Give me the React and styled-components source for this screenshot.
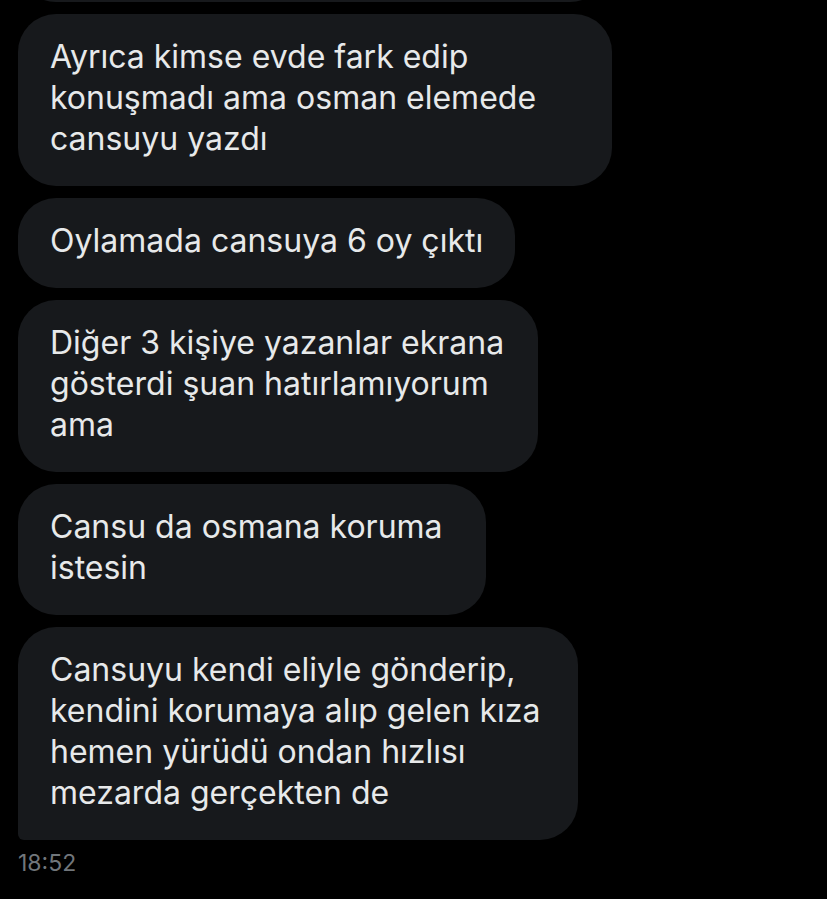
import React from "react";
import styled, { createGlobalStyle } from "styled-components";

const Global = createGlobalStyle`
  html, body {
    margin: 0;
    padding: 0;
    background: #000;
  }
  body {
    font-family: Inter, Roboto, "Noto Sans", sans-serif;
  }
`;

const Thread = styled.div`
  display: flex;
  flex-direction: column;
  align-items: flex-start;
  gap: 12px;
  padding: 0 0 0 18px;
  overflow: hidden;
  min-height: 899px;
  box-sizing: border-box;
`;

const Bubble = styled.div`
  box-sizing: border-box;
  width: ${(p) => p.$w}px;
  padding: 22px 32px 27px 32px;
  background: #17191c;
  color: #e7e9ea;
  font-size: 32px;
  line-height: 41px;
  white-space: nowrap;
  border-radius: 38px 38px 38px ${(p) => (p.$last ? "6px" : "38px")};
`;

const PrevTail = styled(Bubble)`
  height: 100px;
  margin-top: -98px;
`;

const Time = styled.div`
  margin-top: -4px;
  color: #71767b;
  font-size: 23px;
  line-height: 30px;
`;

const messages = [
  { w: 594, lines: ["Ayrıca kimse evde fark edip", "konuşmadı ama osman elemede", "cansuyu yazdı"] },
  { w: 497, lines: ["Oylamada cansuya 6 oy çıktı"] },
  { w: 520, lines: ["Diğer 3 kişiye yazanlar ekrana", "gösterdi şuan hatırlamıyorum", "ama"] },
  { w: 468, lines: ["Cansu da osmana koruma", "istesin"] },
  {
    w: 560,
    last: true,
    lines: [
      "Cansuyu kendi eliyle gönderip,",
      "kendini korumaya alıp gelen kıza",
      "hemen yürüdü ondan hızlısı",
      "mezarda gerçekten de",
    ],
  },
];

export default function App() {
  return (
    <>
      <Global />
      <Thread>
        <PrevTail $w={590} />
        {messages.map((m, i) => (
          <Bubble key={i} $w={m.w} $last={m.last}>
            {m.lines.map((l, j) => (
              <React.Fragment key={j}>
                {l}
                {j < m.lines.length - 1 && <br />}
              </React.Fragment>
            ))}
          </Bubble>
        ))}
        <Time>18:52</Time>
      </Thread>
    </>
  );
}
